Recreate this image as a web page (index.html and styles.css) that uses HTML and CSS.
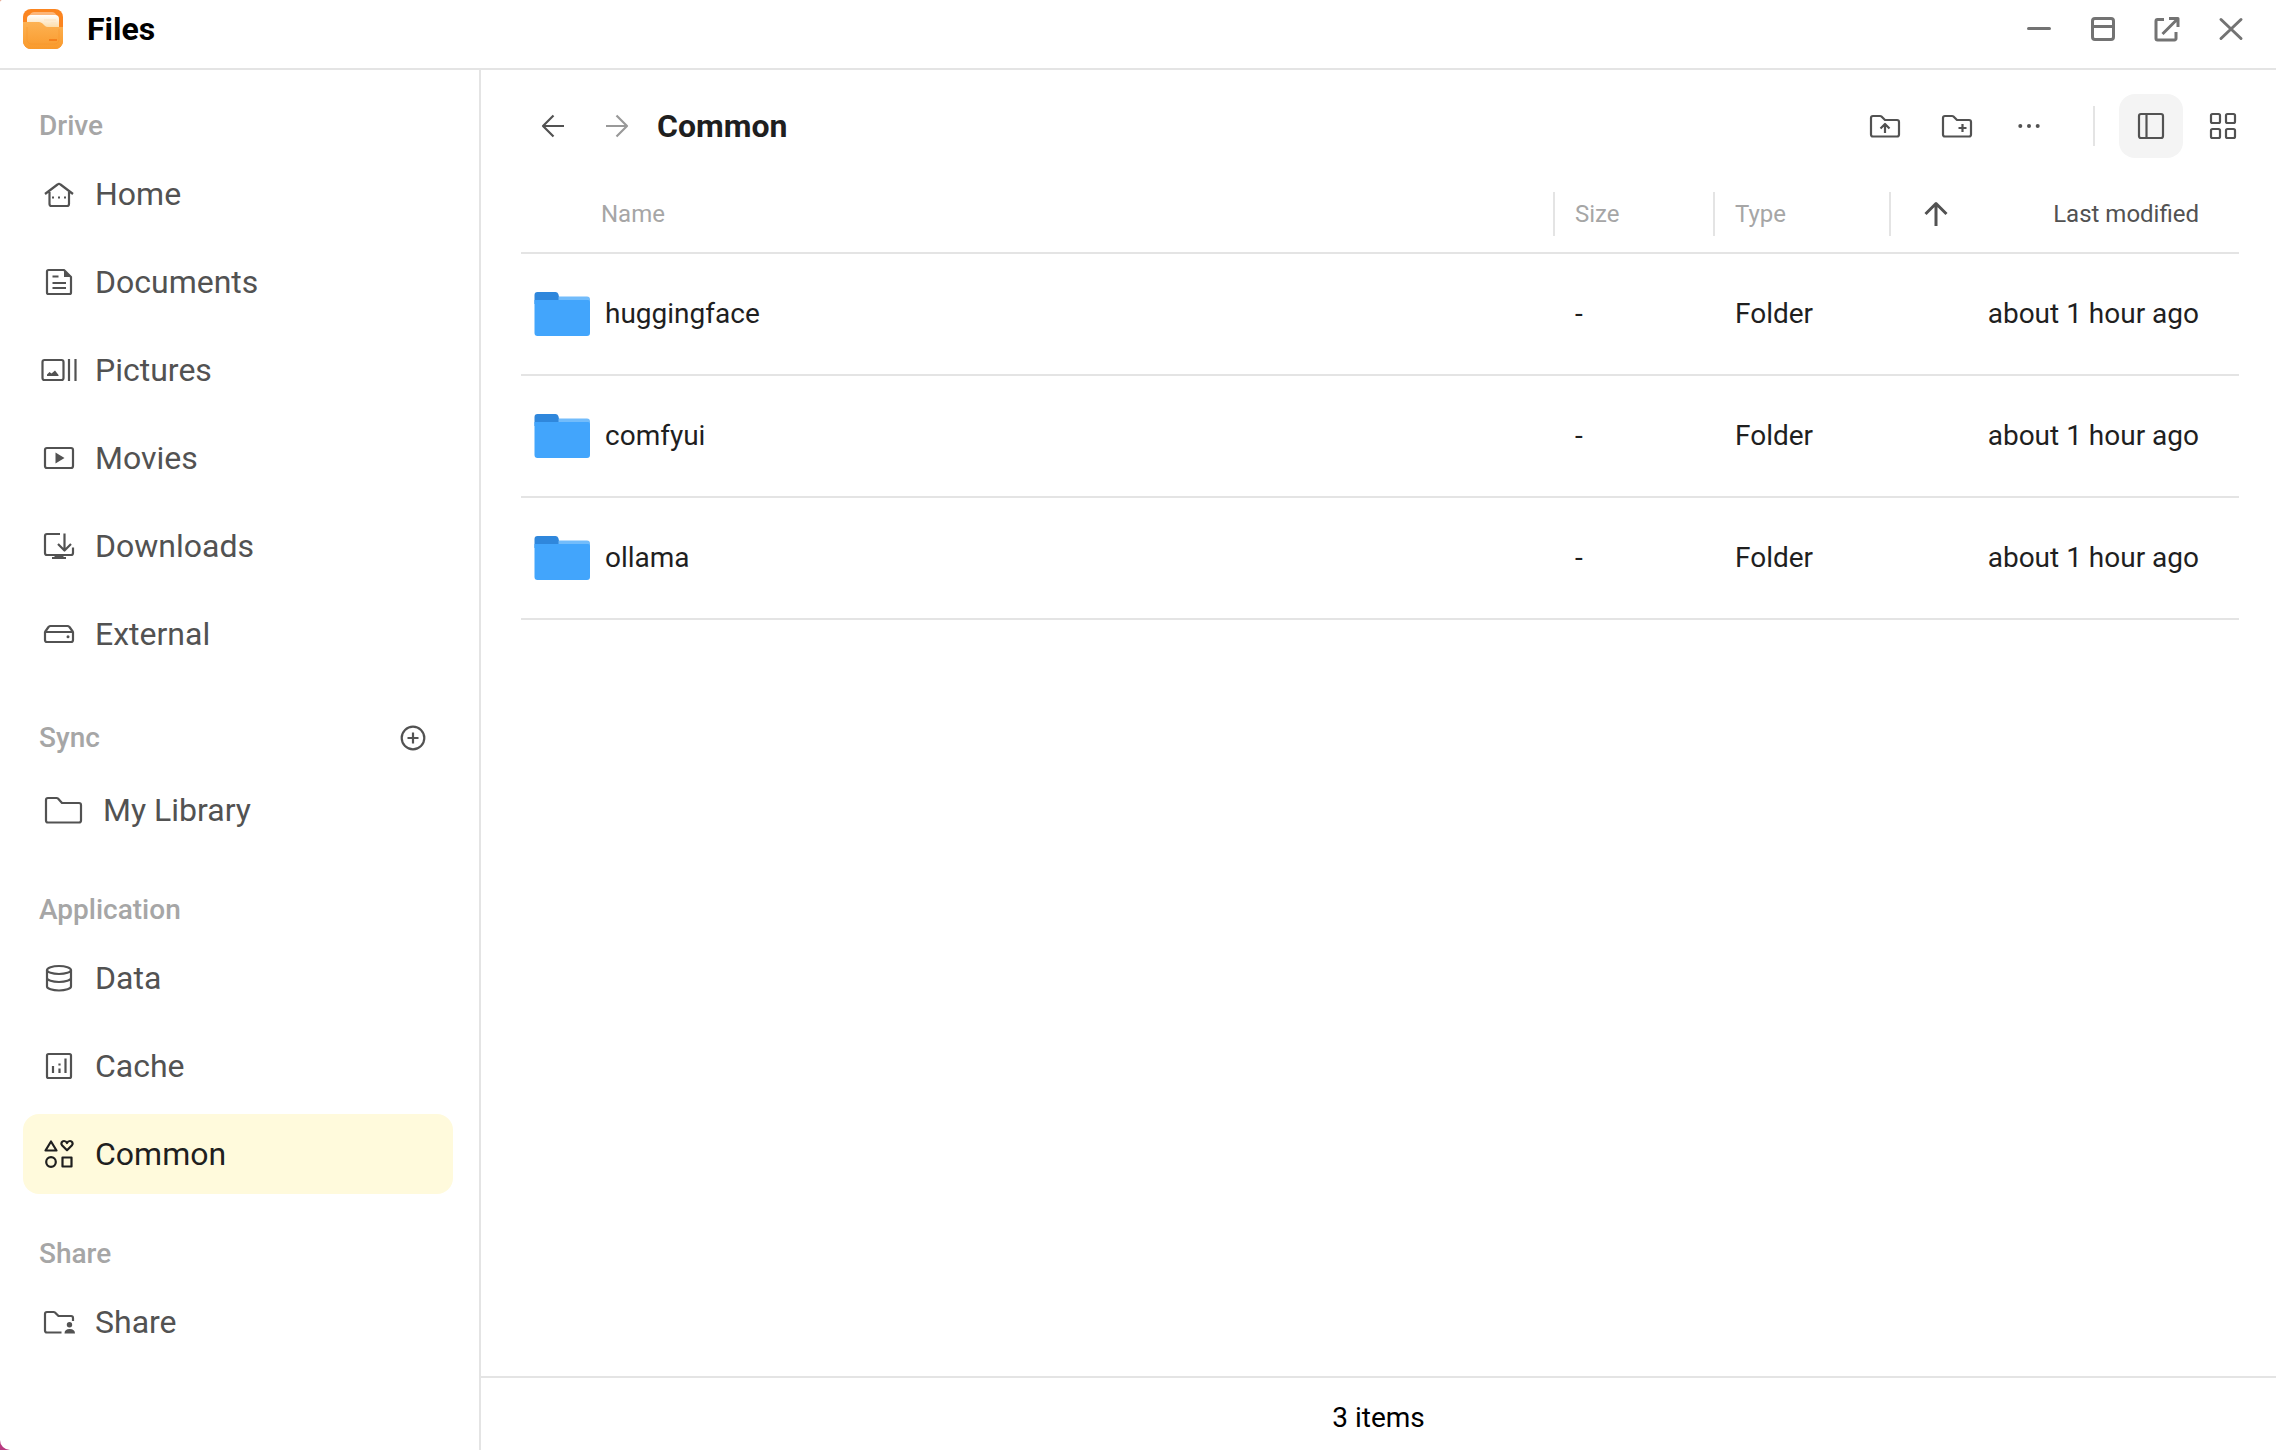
FILE: index.html
```html
<!DOCTYPE html>
<html lang="en">
<head>
	<meta charset="UTF-8">
	<meta name="viewport" content="width=device-width, initial-scale=1.0">

	<title>Files</title>

	<link rel="stylesheet" href="styles.css">
</head>
<body>
	<!-- Shared shapes -->
	<svg class="sprite" aria-hidden="true">
		<symbol id="folder" viewBox="0 0 56 44">
			<path fill="#2f87dc" d="M3.500 0h18a3 3 0 0 1 2.800 2l1.700 6v4H.5V3a3 3 0 0 1 3-3z"/>
			<path fill="#72bcfb" d="M24.500 4.500H53a3 3 0 0 1 3 3V13H24.500z"/>
			<path fill="#42a5fc" d="M.5 8H54a2 2 0 0 1 2 2v31a3 3 0 0 1-3 3H3.500a3 3 0 0 1-3-3z"/>
		</symbol>
	</svg>

	<div class="window">
		<header class="titlebar">
			<svg class="logo" viewBox="0 0 40 40" aria-hidden="true">
				<defs>
					<linearGradient id="paper" x1="0" y1="0" x2="0" y2="1">
						<stop offset="0" stop-color="#fff"/>
						<stop offset="1" stop-color="#fcd79c"/>
					</linearGradient>
					<linearGradient id="front" x1="0" y1="0" x2="0" y2="1">
						<stop offset="0" stop-color="#fdb253"/>
						<stop offset="1" stop-color="#f99a2c"/>
					</linearGradient>
				</defs>
				<rect width="40" height="40" rx="8" fill="#fb8520"/>
				<path fill="#fdb679" d="M6 7q2-4 5-4h18q3 0 5 4z"/>
				<path fill="url(#paper)" d="M4 18v-8q0-4 4-4h24q4 0 4 4v10H4z"/>
				<path stroke="#fde3c0" d="M21 11h12M28 14h5"/>
				<path fill="url(#front)" d="M0 13h16q2 0 3.500 1.500l2 2q1.500 1.500 3.500 1.500h15v14a8 8 0 0 1-8 8H8a8 8 0 0 1-8-8z"/>
				<path fill="none" stroke="#f79428" stroke-opacity=".5" d="M4 18v12q0 5 5 5h22q5 0 5-5V20"/>
				<path stroke="#f4801c" stroke-width="2" d="M26 31h8"/>
			</svg>
			<h1>Files</h1>
			<div class="controls">
				<button type="button" aria-label="Minimize"><svg viewBox="0 0 32 32"><path d="M5.500 15.500h21"/></svg></button>
				<button type="button" aria-label="Maximize"><svg viewBox="0 0 32 32"><rect x="5.500" y="5.500" width="21" height="21" rx="2.500"/><path d="M5.500 13.500h21"/></svg></button>
				<button type="button" aria-label="Open in new tab"><svg class="thin" viewBox="0 0 32 32"><path d="M13 6.500H6.500a1.500 1.500 0 0 0-1.500 1.500v17.500a1.500 1.500 0 0 0 1.500 1.500h17a1.500 1.500 0 0 0 1.500-1.500V19M18 5.500h9V14M27 5.500L11.500 21"/></svg></button>
				<button type="button" aria-label="Close"><svg viewBox="0 0 32 32"><path d="M6 6.500l20 19M26 6.500l-20 19"/></svg></button>
			</div>
		</header>

		<div class="body">
			<nav class="sidebar">
				<section>
					<div class="heading"><h2>Drive</h2></div>
					<ul>
						<li><a href="#home"><svg viewBox="0 0 36 36"><path d="M4 18L16.500 8.500q1.500-1.200 3 0L32 18M8.500 16v12a2 2 0 0 0 2 2h15.500a2 2 0 0 0 2-2V16"/><path class="fill" d="M11 20.500h2v2h-2zM17 20.500h2v2h-2zM23 20.500h2v2h-2z"/></svg>Home</a></li>
						<li><a href="#documents"><svg viewBox="0 0 36 36"><path d="M23 6H7.500A1.500 1.500 0 0 0 6 7.500v21A1.500 1.500 0 0 0 7.500 30h21a1.500 1.500 0 0 0 1.500-1.500V13zM11.500 12.500h6M11.500 19H25M11.500 24H25"/><path class="fill" d="M23 6v7h7z"/></svg>Documents</a></li>
						<li><a href="#pictures"><svg viewBox="0 0 36 36"><rect x="1.500" y="8" width="21" height="20" rx="2"/><path d="M28 7v22M34.500 7v22"/><path class="fill" d="M6 24v-1.500l2.500-2.500 2 1.500 3.500-3 3.500 4.500v1z"/></svg>Pictures</a></li>
						<li><a href="#movies"><svg viewBox="0 0 36 36"><rect x="4" y="8" width="28" height="20" rx="2"/><path class="fill" d="M14.500 12.500v11l9-5.500z"/></svg>Movies</a></li>
						<li><a href="#downloads"><svg viewBox="0 0 36 36"><path d="M19 6H6a2 2 0 0 0-2 2v17a2 2 0 0 0 2 2h24a2 2 0 0 0 2-2v-5.500M23.500 5.500V22M17 16l6.500 6.500L30 16"/><path class="fill" d="M13.500 27h9v2H25v2H11v-2h2.500z"/></svg>Downloads</a></li>
						<li><a href="#external"><svg viewBox="0 0 36 36"><path d="M4 16v8a2 2 0 0 0 2 2h24a2 2 0 0 0 2-2v-8zM4 16l3.500-5q1-1 2-1h17q1 0 2 1l3.500 5"/><circle class="fill" cx="27" cy="20.700" r="1.500"/></svg>External</a></li>
					</ul>
				</section>
				<section>
					<div class="heading">
						<h2>Sync</h2>
						<button type="button" aria-label="New library"><svg viewBox="0 0 36 36"><circle cx="18" cy="18" r="11.300"/><path d="M18 12.500v11M12.500 18h11"/></svg></button>
					</div>
					<ul>
						<li><a href="#library"><svg class="large" viewBox="0 0 44 44"><path d="M5 12a2 2 0 0 1 2-2h8.500q1 0 1.500.500l4 4.500h17a2 2 0 0 1 2 2v15.500a2 2 0 0 1-2 2H7a2 2 0 0 1-2-2z"/></svg>My Library</a></li>
					</ul>
				</section>
				<section>
					<div class="heading"><h2>Application</h2></div>
					<ul>
						<li><a href="#data"><svg viewBox="0 0 36 36"><ellipse cx="18" cy="10" rx="12" ry="4"/><path d="M6 10v16.500c0 2.200 5.400 4 12 4s12-1.800 12-4V10M6 18c0 2.200 5.400 4 12 4s12-1.800 12-4"/></svg>Data</a></li>
						<li><a href="#cache"><svg viewBox="0 0 36 36"><rect x="6" y="6" width="24" height="24" rx="1.500"/><path d="M12 18v7M18.500 20.500V25M18.500 15.500v2M24.500 10.500V25"/></svg>Cache</a></li>
						<li><a class="active" href="#common" aria-current="page"><svg viewBox="0 0 36 36"><path d="M10 5.500L15.500 14.500h-11z"/><path d="M26 14.200l-5-5c-1.500-2 0-4.200 2-4.200 1.500 0 2.500 1 3 2 .500-1 1.500-2 3-2 2 0 3.500 2.200 2 4.200z"/><circle cx="10" cy="26" r="4.800"/><rect x="21.500" y="21.500" width="9" height="9"/></svg>Common</a></li>
					</ul>
				</section>
				<section>
					<div class="heading"><h2>Share</h2></div>
					<ul>
						<li><a href="#share"><svg viewBox="0 0 36 36"><path d="M20.500 28.500H6a2 2 0 0 1-2-2V10a2 2 0 0 1 2-2h6.500q1 0 1.500.500l3.500 3.500H30a2 2 0 0 1 2 2v3"/><circle class="fill" cx="28.500" cy="20.700" r="2.700"/><path class="fill" d="M23.500 29.500q0-4.500 5.200-4.500t5.300 4.500z"/></svg>Share</a></li>
					</ul>
				</section>
			</nav>

			<main>
				<div class="toolbar">
					<div class="history">
						<button type="button" aria-label="Back"><svg viewBox="0 0 36 36"><path d="M29 18H8.500M18.500 7.500L8 18 18.500 28.500"/></svg></button>
						<button type="button" aria-label="Forward" disabled><svg viewBox="0 0 36 36"><path d="M7 18H27.500M17.500 7.500L28 18 17.500 28.500"/></svg></button>
					</div>
					<h2>Common</h2>
					<div class="actions">
						<button type="button" aria-label="Upload"><svg viewBox="0 0 36 36"><path d="M4 10a2 2 0 0 1 2-2h7q1 0 1.500.500L18 12h12a2 2 0 0 1 2 2v12.500a2 2 0 0 1-2 2H6a2 2 0 0 1-2-2zM18 25v-9M13.500 20.500L18 16l4.500 4.500"/></svg></button>
						<button type="button" aria-label="New folder"><svg viewBox="0 0 36 36"><path d="M4 10a2 2 0 0 1 2-2h7q1 0 1.500.500L18 12h12a2 2 0 0 1 2 2v12.500a2 2 0 0 1-2 2H6a2 2 0 0 1-2-2zM23.500 16v8M19.500 20h8"/></svg></button>
						<button type="button" aria-label="More"><svg viewBox="0 0 36 36"><g class="fill"><circle cx="9.300" cy="18" r="2"/><circle cx="18" cy="18" r="2"/><circle cx="26.700" cy="18" r="2"/></g></svg></button>
						<span class="divider"></span>
						<button type="button" class="selected" aria-label="List view" aria-pressed="true"><svg viewBox="0 0 36 36"><rect x="6" y="6" width="24" height="24" rx="2"/><path d="M13.500 6v24"/></svg></button>
						<button type="button" aria-label="Grid view" aria-pressed="false"><svg viewBox="0 0 36 36"><rect x="6" y="6" width="9" height="9" rx="1.500"/><rect x="21" y="6" width="9" height="9" rx="1.500"/><rect x="6" y="21" width="9" height="9" rx="1.500"/><rect x="21" y="21" width="9" height="9" rx="1.500"/></svg></button>
					</div>
				</div>

				<div class="listing">
					<table>
						<thead>
							<tr>
								<th class="name">Name</th>
								<th class="size"><div>Size</div></th>
								<th class="type"><div>Type</div></th>
								<th class="modified" aria-sort="ascending"><div><svg viewBox="0 0 36 36" aria-hidden="true"><path d="M18 30V8M7.500 18L18 7.500 28.500 18"/></svg>Last modified</div></th>
							</tr>
						</thead>
						<tbody>
							<tr>
								<td><div class="file"><svg aria-hidden="true"><use href="#folder"/></svg>huggingface</div></td>
								<td>-</td>
								<td>Folder</td>
								<td>about 1 hour ago</td>
							</tr>
							<tr>
								<td><div class="file"><svg aria-hidden="true"><use href="#folder"/></svg>comfyui</div></td>
								<td>-</td>
								<td>Folder</td>
								<td>about 1 hour ago</td>
							</tr>
							<tr>
								<td><div class="file"><svg aria-hidden="true"><use href="#folder"/></svg>ollama</div></td>
								<td>-</td>
								<td>Folder</td>
								<td>about 1 hour ago</td>
							</tr>
						</tbody>
					</table>
				</div>

				<footer>3 items</footer>
			</main>
		</div>
	</div>
</body>
</html>
```
FILE: styles.css
```css
:root {
	--ink     : #1f1f1f;
	--ink-soft: #525252;
	--ink-mute: #a6a6a6;
	--line    : #e4e4e4;
}

* { box-sizing: border-box; }

body {
	margin     : 0;
	font-family: Roboto, sans-serif;
	font-size  : 28px;
	line-height: 40px;
	color      : var(--ink);
	background : linear-gradient(#e08a6a, #b83a80);
}

h1, h2, ul {
	margin : 0;
	padding: 0;
}

ul { list-style: none; }

button {
	display        : flex;
	align-items    : center;
	justify-content: center;
	padding        : 0;
	border         : 0;
	color          : inherit;
	background     : none;
	cursor         : pointer;
}

svg {
	flex           : none;
	width          : 36px;
	height         : 36px;
	fill           : none;
	stroke         : currentColor;
	stroke-width   : 2.2;
	stroke-linejoin: round;
}

.fill {
	fill  : currentColor;
	stroke: none;
}

.sprite {
	position: absolute;
	width   : 0;
	height  : 0;
}

.window {
	display       : flex;
	flex-direction: column;
	min-height    : 100vh;
	border-radius : 2px 0 0 10px;
	background    : #fff;
	overflow      : hidden;
}

/* Title bar */
.titlebar {
	display      : flex;
	align-items  : center;
	gap          : 24px;
	padding      : 9px 29px 19px 23px;
	border-bottom: 2px solid var(--line);
}

.logo {
	width       : 40px;
	height      : 40px;
	stroke      : none;
	stroke-width: 1;
}

.titlebar h1 {
	font-size  : 32px;
	font-weight: 700;
	color      : #000;
}

.controls {
	display    : flex;
	gap        : 32px;
	margin-left: auto;
	color      : #737373;
}

.controls svg {
	width         : 32px;
	height        : 32px;
	stroke-width  : 3;
	stroke-linecap: round;
}

.controls .thin { stroke-linecap: butt; }

.body {
	display: flex;
	flex   : 1;
}

/* Sidebar */
.sidebar {
	flex        : none;
	width       : 481px;
	padding     : 36px 26px 36px 23px;
	border-right: 2px solid var(--line);
	color       : var(--ink-soft);
}

.sidebar section + section { margin-top: 40px; }

.heading {
	display        : flex;
	align-items    : center;
	justify-content: space-between;
	margin-bottom  : 8px;
	padding        : 0 16px;
}

.heading h2 {
	font-size  : 28px;
	font-weight: 500;
	color      : var(--ink-mute);
}

.heading button {
	width : 48px;
	height: 48px;
}

.sidebar ul {
	display       : flex;
	flex-direction: column;
	gap           : 8px;
}

.sidebar a {
	display        : flex;
	align-items    : center;
	gap            : 18px;
	height         : 80px;
	padding        : 0 18px;
	border-radius  : 16px;
	font-size      : 32px;
	color          : inherit;
	text-decoration: none;
}

.sidebar a.active {
	color     : var(--ink);
	background: #fffadc;
}

.sidebar .large {
	width : 44px;
	height: 44px;
}

/* Content */
main {
	display       : flex;
	flex          : 1;
	flex-direction: column;
	min-width     : 0;
}

.toolbar {
	display    : flex;
	align-items: center;
	gap        : 16px;
	padding    : 24px 21px 18px 48px;
	color      : var(--ink-soft);
}

.toolbar h2 {
	font-size  : 32px;
	font-weight: 700;
	color      : var(--ink);
}

.history {
	display: flex;
	gap    : 16px;
}

.history button {
	width : 48px;
	height: 48px;
}

.history button:disabled { color: #999; }

.actions {
	display    : flex;
	align-items: center;
	gap        : 8px;
	margin-left: auto;
}

.actions button {
	width        : 64px;
	height       : 64px;
	border-radius: 16px;
}

.actions .selected { background: #f4f4f4; }

.divider {
	width     : 2px;
	height    : 40px;
	margin    : 0 16px 0 24px;
	background: var(--line);
}

.listing {
	flex   : 1;
	padding: 0 37px 0 40px;
}

table {
	width          : 100%;
	table-layout   : fixed;
	border-collapse: separate;
	border-spacing : 0;
}

th, td {
	padding      : 0 0 0 22px;
	border-bottom: 2px solid var(--line);
	text-align   : left;
}

th {
	height     : 78px;
	padding    : 0;
	font-size  : 24px;
	font-weight: 400;
	color      : var(--ink-mute);
}

td { height: 122px; }

td:first-child { padding-left: 13px; }

td:last-child {
	padding-right: 40px;
	text-align   : right;
}

th.name { padding-left: 80px; }

th.size { width: 160px; }

th.type { width: 176px; }

th.modified {
	width: 350px;
	color: var(--ink-soft);
}

th div {
	display    : flex;
	align-items: center;
	height     : 44px;
	border-left: 2px solid var(--line);
	padding    : 0 20px;
}

th.modified div {
	justify-content: space-between;
	padding        : 0 40px 0 27px;
}

th.modified svg { stroke-width: 3; }

.file {
	display    : flex;
	align-items: center;
	gap        : 15px;
}

.file svg {
	width : 56px;
	height: 44px;
	stroke: none;
}

footer {
	padding   : 20px 0 12px;
	border-top: 2px solid var(--line);
	text-align: center;
	color     : #000;
}
```
